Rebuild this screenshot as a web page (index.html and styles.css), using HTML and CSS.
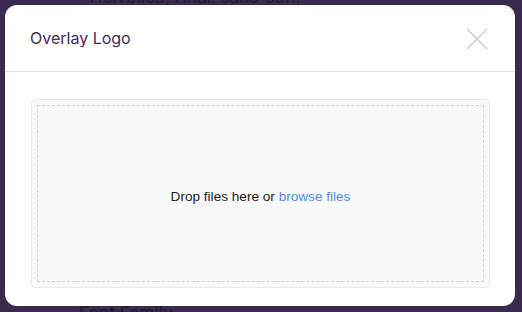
FILE: index.html
```html
<!DOCTYPE html>
<html lang="en">
<head>
<meta charset="utf-8">
<title>Overlay Logo</title>
<link rel="stylesheet" href="styles.css">
</head>
<body>
<div class="page">
  <div class="field-value">Helvetica, Arial, sans-serif</div>
  <div class="field-label">Font Family</div>
</div>
<div class="modal" role="dialog" aria-label="Overlay Logo">
  <div class="modal-header">
    <h2 class="modal-title">Overlay Logo</h2>
    <button class="close" aria-label="Close">
      <svg width="22" height="22" viewBox="0 0 22 22"><path d="M1 1L21 21M21 1L1 21" stroke="#cfcfcf" stroke-width="1.6" fill="none"/></svg>
    </button>
  </div>
  <div class="modal-body">
    <div class="dropzone">
      <div class="dropzone-inner">
        <span>Drop files here or <a class="browse" href="#">browse files</a></span>
      </div>
    </div>
  </div>
</div>
</body>
</html>
```
FILE: styles.css
```css
html, body {
  margin: 0;
  padding: 0;
}
body {
  width: 522px;
  height: 312px;
  overflow: hidden;
  background: #3a2a4e;
  font-family: "Liberation Sans", Arial, sans-serif;
  position: relative;
}
.page {
  padding-left: 79px;
  display: flex;
  flex-direction: column;
}
.field-value {
  margin-top: -10px;
  margin-left: 11px;
  font-family: Inter, sans-serif;
  font-size: 17px;
  line-height: 14px;
  color: #261b35;
}
.field-label {
  margin-top: 299px;
  font-family: Inter, sans-serif;
  font-size: 17px;
  font-weight: 600;
  line-height: 20px;
  color: #261b35;
}
.modal {
  position: absolute;
  left: 5px;
  top: 5px;
  width: 510px;
  height: 301px;
  background: #fff;
  border-radius: 12px;
  display: flex;
  flex-direction: column;
}
.modal-header {
  height: 66px;
  border-bottom: 1px solid #e4e4e4;
  display: flex;
  align-items: center;
  justify-content: space-between;
  padding: 0 27px 0 25px;
}
.modal-title {
  margin: 0;
  font-family: Inter, sans-serif;
  font-weight: 400;
  font-size: 16px;
  color: #3b2d54;
}
.close {
  border: 0;
  background: none;
  padding: 0;
  width: 22px;
  height: 22px;
  cursor: pointer;
  margin-top: 2px;
}
.close svg {
  display: block;
}
.modal-body {
  flex: 1;
  padding: 27px 25px 18px 26px;
  display: flex;
}
.dropzone {
  flex: 1;
  border: 1px solid #ebebeb;
  border-radius: 4px;
  background: #f9f9f9;
  padding: 5px;
  display: flex;
}
.dropzone-inner {
  flex: 1;
  border: 1px dashed #d6d6d6;
  display: flex;
  align-items: center;
  justify-content: center;
  padding-top: 6px;
  font-size: 13.6px;
  color: #222;
}
.browse {
  color: #4a8fe2;
  text-decoration: none;
}
```
